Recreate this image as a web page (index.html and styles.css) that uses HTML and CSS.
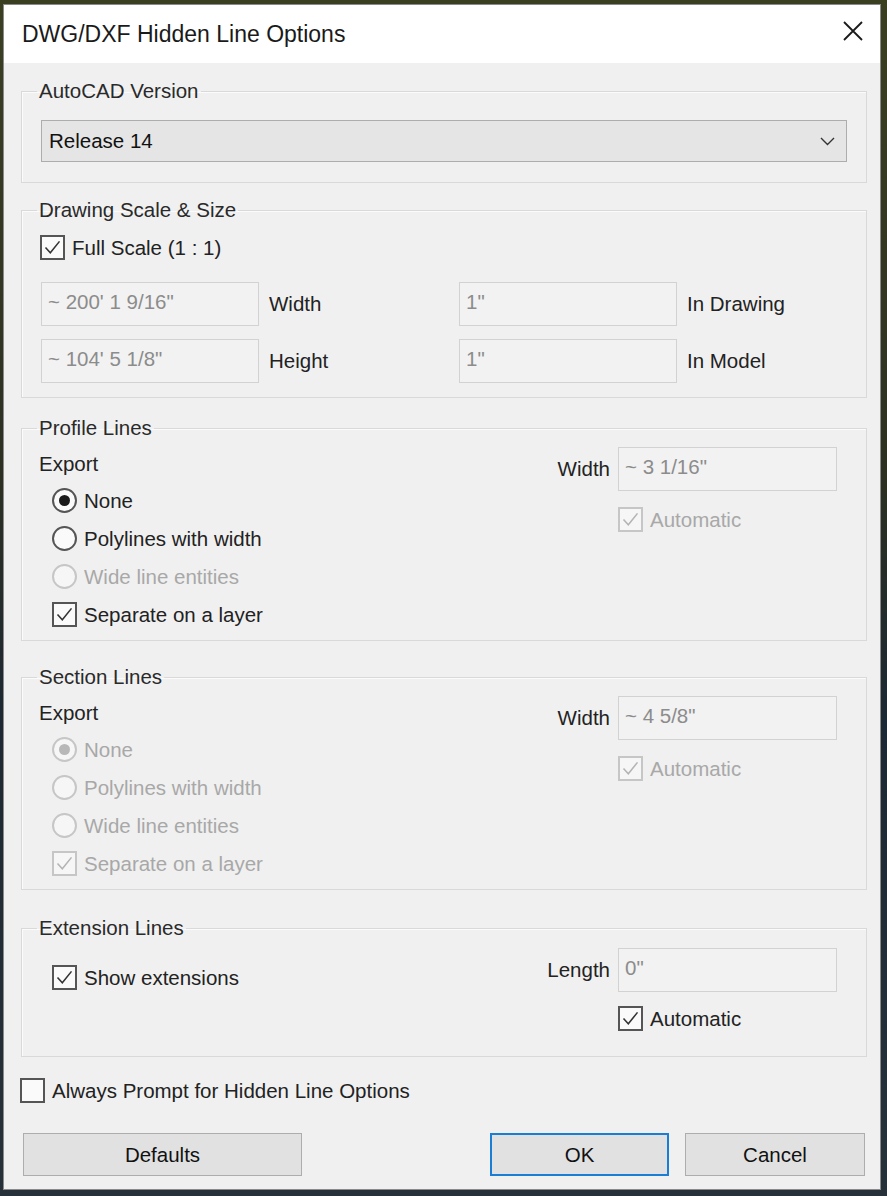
FILE: index.html
```html
<!DOCTYPE HTML>
<html>
<head>
  <meta charset="utf-8">
  <title>DWG/DXF Hidden Line Options</title>
  <link rel="stylesheet" href="styles.css">
</head>
<body>

  <div class="dialog">
    <div class="titlebar">
      <span class="title">DWG/DXF Hidden Line Options</span>
      <svg class="close" width="20" height="20" viewBox="0 0 20 20">
        <path d="M1 1 L19 19 M19 1 L1 19" stroke="#1a1a1a" stroke-width="1.8" fill="none"/>
      </svg>
    </div>

    <div class="content">
      <!-- autocad version -->
      <fieldset class="group group-version">
        <legend>AutoCAD Version</legend>
        <div class="version-body">
          <div class="select">
            <span>Release 14</span>
            <svg width="15" height="9" viewBox="0 0 15 9">
              <polyline points="1,1 7.5,7.5 14,1" stroke="#333" stroke-width="1.4" fill="none"/>
            </svg>
          </div>
        </div>
      </fieldset>

      <!-- scale & size -->
      <fieldset class="group group-scale">
        <legend>Drawing Scale &amp; Size</legend>
        <div class="scale-body">
          <label class="check">
            <span class="box"><svg viewBox="0 0 24 24"><polyline points="4,12 9.5,18 20,5"/></svg></span>
            Full Scale (1 : 1)
          </label>
          <div class="size-grid">
            <div class="field">~ 200' 1 9/16"</div>
            <span>Width</span>
            <div class="field">1"</div>
            <span>In Drawing</span>
            <div class="field">~ 104' 5 1/8"</div>
            <span>Height</span>
            <div class="field">1"</div>
            <span>In Model</span>
          </div>
        </div>
      </fieldset>

      <!-- profile lines -->
      <fieldset class="group group-profile">
        <legend>Profile Lines</legend>
        <div class="group-body">
          <div class="export">
            <div class="export-title">Export</div>
            <div class="options">
              <label class="radio"><span class="dot on"></span>None</label>
              <label class="radio"><span class="dot"></span>Polylines with width</label>
              <label class="radio disabled"><span class="dot"></span>Wide line entities</label>
              <label class="check">
                <span class="box"><svg viewBox="0 0 24 24"><polyline points="4,12 9.5,18 20,5"/></svg></span>
                Separate on a layer
              </label>
            </div>
          </div>
          <div class="side">
            <span class="side-label">Width</span>
            <div class="field">~ 3 1/16"</div>
            <label class="check side-check disabled">
              <span class="box"><svg viewBox="0 0 24 24"><polyline points="4,12 9.5,18 20,5"/></svg></span>
              Automatic
            </label>
          </div>
        </div>
      </fieldset>

      <!-- section lines -->
      <fieldset class="group group-section">
        <legend>Section Lines</legend>
        <div class="group-body">
          <div class="export">
            <div class="export-title">Export</div>
            <div class="options">
              <label class="radio disabled"><span class="dot on"></span>None</label>
              <label class="radio disabled"><span class="dot"></span>Polylines with width</label>
              <label class="radio disabled"><span class="dot"></span>Wide line entities</label>
              <label class="check disabled">
                <span class="box"><svg viewBox="0 0 24 24"><polyline points="4,12 9.5,18 20,5"/></svg></span>
                Separate on a layer
              </label>
            </div>
          </div>
          <div class="side">
            <span class="side-label">Width</span>
            <div class="field">~ 4 5/8"</div>
            <label class="check side-check disabled">
              <span class="box"><svg viewBox="0 0 24 24"><polyline points="4,12 9.5,18 20,5"/></svg></span>
              Automatic
            </label>
          </div>
        </div>
      </fieldset>

      <!-- extension lines -->
      <fieldset class="group group-ext">
        <legend>Extension Lines</legend>
        <div class="group-body">
          <div class="ext-left">
            <label class="check">
              <span class="box"><svg viewBox="0 0 24 24"><polyline points="4,12 9.5,18 20,5"/></svg></span>
              Show extensions
            </label>
          </div>
          <div class="side side-ext">
            <span class="side-label">Length</span>
            <div class="field">0"</div>
            <label class="check side-check">
              <span class="box"><svg viewBox="0 0 24 24"><polyline points="4,12 9.5,18 20,5"/></svg></span>
              Automatic
            </label>
          </div>
        </div>
      </fieldset>

      <label class="check prompt"><span class="box off"></span>Always Prompt for Hidden Line Options</label>

      <div class="buttons">
        <div class="btn btn-defaults">Defaults</div>
        <div class="btn btn-ok">OK</div>
        <div class="btn btn-cancel">Cancel</div>
      </div>
    </div>
  </div>

</body>
</html>
```

FILE: styles.css
```css
html,
body {
  margin: 0;
  padding: 0;
}
body {
  width: 887px;
  height: 1196px;
  overflow: hidden;
  background: linear-gradient(#3b3f22 0, #2c3022 40%, #1c2833 60%, #27313a 100%);
  font-family: "Liberation Sans", Arial, sans-serif;
  font-size: 20.5px;
  color: #222;
}
.dialog {
  width: 878px;
  margin: 4px 0 0 3px;
  box-sizing: border-box;
  border: 1px solid #8a8a8a;
  background: #f0f0f0;
}
.titlebar {
  height: 58px;
  background: #fff;
  display: flex;
  align-items: center;
  justify-content: space-between;
  padding: 0 17px 4px 18px;
  box-sizing: border-box;
}
.title {
  font-size: 23px;
  color: #1a1a1a;
  padding-top: 4px;
}
.close {
  display: block;
  margin-top: -3px;
}
.content {
  display: flex;
  flex-direction: column;
  align-items: flex-start;
  padding: 0 13px 13px 17px;
}

/* group boxes */
.group {
  align-self: stretch;
  margin: 0;
  padding: 0;
  min-width: 0;
  border: 1px solid #d9d9d9;
  box-shadow: inset 1px 1px 0 #fbfbfb;
}
.group legend {
  margin-left: 15px;
  padding: 0 2px;
  line-height: 20px;
  color: #2a2a2a;
}
.group-version {
  margin-top: 18px;
}
.version-body {
  padding: 19px 19px 20px 19px;
}
.group-scale {
  margin-top: 17px;
}
.scale-body {
  padding: 15px 18px 14px 18px;
}
.group-profile {
  margin-top: 20px;
}
.group-section {
  margin-top: 26px;
}
.group-ext {
  margin-top: 28px;
}

/* dropdown */
.select {
  height: 42px;
  box-sizing: border-box;
  border: 1px solid #adadad;
  background: #e5e5e5;
  display: flex;
  align-items: center;
  justify-content: space-between;
  padding: 0 11px 0 7px;
  color: #111;
}
.select svg {
  display: block;
}

/* inputs */
.field {
  height: 44px;
  box-sizing: border-box;
  border: 1px solid #d2d2d2;
  background: #f2f2f2;
  color: #8c8c8c;
  padding: 8px 6px 0;
  line-height: 22px;
  white-space: nowrap;
}
.size-grid {
  display: grid;
  grid-template-columns: 218px 180px 218px auto;
  column-gap: 10px;
  row-gap: 13px;
  align-items: center;
  margin: 22px 0 0 1px;
}

/* checkbox & radio */
.check,
.radio {
  display: flex;
  align-items: center;
  gap: 7px;
  height: 25px;
  white-space: nowrap;
}
.box {
  width: 25px;
  height: 25px;
  box-sizing: border-box;
  border: 2px solid #555;
  background: #fafafa;
  display: flex;
  align-items: center;
  justify-content: center;
}
.box svg {
  width: 21px;
  height: 21px;
  fill: none;
  stroke: #333;
  stroke-width: 1.8;
}
.dot {
  width: 25px;
  height: 25px;
  box-sizing: border-box;
  border: 2px solid #555;
  border-radius: 50%;
  background: #fafafa;
  display: flex;
  align-items: center;
  justify-content: center;
}
.dot.on::after {
  content: "";
  width: 11px;
  height: 11px;
  border-radius: 50%;
  background: #1a1a1a;
}
.disabled {
  color: #a8a8a8;
}
.disabled .box,
.disabled .dot {
  border-color: #c6c6c6;
  background: #f6f6f6;
}
.disabled .box svg {
  stroke: #b4b4b4;
}
.disabled .dot.on::after {
  background: #b8b8b8;
}

/* profile / section layout */
.group-body {
  display: flex;
  justify-content: space-between;
  padding: 0 29px 13px 17px;
}
.export {
  padding-top: 14px;
}
.export-title {
  line-height: 24px;
}
.options {
  display: flex;
  flex-direction: column;
  gap: 13px;
  margin: 12px 0 0 13px;
}
.side {
  display: grid;
  grid-template-columns: auto 219px;
  column-gap: 8px;
  row-gap: 16px;
  align-items: center;
  align-content: start;
  margin-top: 9px;
}
.side-check {
  grid-column: 2;
}
.ext-left {
  padding: 27px 0 0 13px;
}
.side-ext {
  margin-top: 10px;
  row-gap: 14px;
}
.group-ext .group-body {
  padding-bottom: 25px;
}

/* bottom */
.prompt {
  margin: 21px 0 0 -1px;
}
.buttons {
  align-self: stretch;
  display: flex;
  margin: 30px 2px 0 2px;
}
.btn {
  height: 43px;
  box-sizing: border-box;
  border: 1px solid #adadad;
  background: #e1e1e1;
  display: flex;
  align-items: center;
  justify-content: center;
  color: #111;
}
.btn-defaults {
  width: 279px;
}
.btn-ok {
  width: 179px;
  margin-left: auto;
  border: 2px solid #1a7fd4;
}
.btn-cancel {
  width: 180px;
  margin-left: 16px;
}
```
